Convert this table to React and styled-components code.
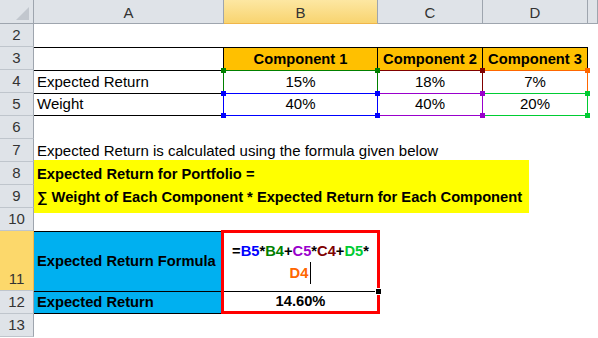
import React from "react"
import styled, { createGlobalStyle } from "styled-components"

const GlobalStyle = createGlobalStyle`
  html, body {
    margin: 0;
    padding: 0;
    background: #fff;
  }
  body {
    overflow: hidden;
    font-family: "Liberation Sans", Arial, sans-serif;
  }
`

const headerBg = "#dfe3e8"
const headerLine = "#9ea5ae"

const Sheet = styled.div`
  display: grid;
  grid-template-columns: 34px 190px 154px 105px 105px 1fr;
  grid-template-rows: 24px repeat(9, 23px) 60px 23px 23px 1fr;
  width: 598px;
  height: 338px;
  font-size: 15px;
  color: #000;
  background: #fff;
`

const Corner = styled.div`
  grid-column: 1;
  grid-row: 1;
  display: flex;
  align-items: flex-end;
  justify-content: flex-end;
  padding: 0 3px 2px 0;
  box-sizing: border-box;
  background: ${headerBg};
  border-right: 1px solid ${headerLine};
  border-bottom: 1px solid ${headerLine};
`

const ColHeader = styled.div`
  grid-column: ${p => p.$col};
  grid-row: 1;
  display: flex;
  align-items: center;
  justify-content: center;
  padding-top: 2px;
  box-sizing: border-box;
  color: #333;
  background: ${p =>
    p.$selected ? "linear-gradient(#fde7a2, #f8d470)" : headerBg};
  border-right: 1px solid ${headerLine};
  border-bottom: 1px solid ${p => (p.$selected ? "#f0b64a" : headerLine)};
`

const RowHeader = styled.div`
  grid-column: 1;
  grid-row: ${p => p.$row};
  display: flex;
  align-items: flex-end;
  justify-content: center;
  padding-bottom: 1px;
  box-sizing: border-box;
  line-height: 20px;
  color: #333;
  background: ${p => (p.$selected ? "#fcd86b" : headerBg)};
  border-right: 1px solid ${p => (p.$selected ? "#f0b64a" : headerLine)};
  border-bottom: 1px solid #bfc5cc;
`

const line = "1px solid #000"

const Cell = styled.div`
  grid-column: ${p => p.$col} / span ${p => p.$span || 1};
  grid-row: ${p => p.$row};
  position: relative;
  display: flex;
  align-items: ${p => (p.$middle ? "center" : "flex-end")};
  justify-content: ${p => (p.$center ? "center" : "flex-start")};
  padding: 0 3px 1px;
  box-sizing: border-box;
  line-height: 20px;
  white-space: nowrap;
  font-weight: ${p => (p.$bold ? 700 : 400)};
  font-size: ${p => (p.$bold ? "14.7px" : "15px")};
  background: ${p => p.$bg || "transparent"};
  border-top: ${p => (p.$top ? line : "0")};
  border-right: ${p => (p.$right ? line : "0")};
  border-bottom: ${p => (p.$bottom ? line : "0")};
`

const Highlight = styled.span`
  position: absolute;
  inset: -1px;
  border: 1px solid ${p => p.$color};
  z-index: ${p => p.$z};
  pointer-events: none;
`

const Handle = styled.i`
  position: absolute;
  width: 5px;
  height: 5px;
  background: ${p => p.$color};
  ${p => (p.$top ? "top: -3px;" : "bottom: -3px;")}
  ${p => (p.$left ? "left: -3px;" : "right: -3px;")}
`

const Banner = styled.div`
  grid-column: 2 / span 4;
  grid-row: 8 / span 2;
  margin: -2px 59px -5px 0;
  padding: 3px 3px 0;
  display: flex;
  flex-direction: column;
  background: #ffff00;
  font-weight: 700;
  font-size: 14.7px;
  line-height: 23px;
  white-space: nowrap;
`

const FormulaBox = styled.div`
  grid-column: 3;
  grid-row: 11 / span 2;
  position: relative;
  z-index: 10;
  margin: -1px -2px 0 -3px;
  display: flex;
  flex-direction: column;
  border: 3px solid #ff0000;
  font-weight: 700;
  font-size: 14.7px;
`

const FormulaText = styled.div`
  flex: 1;
  display: flex;
  flex-direction: column;
  align-items: center;
  justify-content: center;
  line-height: 22px;
  white-space: nowrap;
`

const FormulaLine = styled.div`
  display: flex;
  align-items: center;
`

const Ref = styled.span`
  color: ${p => p.$color};
`

const Cursor = styled.span`
  display: inline-block;
  width: 1px;
  height: 22px;
  margin-left: 2px;
  background: #000;
`

const Result = styled.div`
  position: relative;
  height: 20px;
  box-sizing: border-box;
  display: flex;
  align-items: center;
  justify-content: center;
  border-top: 1px solid #000;
  line-height: 19px;
`

const FillHandle = styled.span`
  position: absolute;
  top: -4px;
  right: -5px;
  width: 5px;
  height: 5px;
  background: #000;
  border: 1px solid #fff;
`

const corners = [
  { $top: true, $left: true },
  { $top: true },
  { $left: true },
  {},
]

const Ranged = ({ color, z }) => (
  <Highlight $color={color} $z={z}>
    {corners.map((c, i) => (
      <Handle key={i} $color={color} {...c} />
    ))}
  </Highlight>
)

const orange = "#ffc000"
const blue = "#00b0f0"

const values = [
  { row: 4, label: "Expected Return", cells: ["15%", "18%", "7%"], colors: ["#008000", "#800000", "#ff6600"], z: [3, 2, 1] },
  { row: 5, label: "Weight", cells: ["40%", "40%", "20%"], colors: ["#0000ff", "#9900cc", "#00cc33"], z: [6, 5, 4] },
]

const rows = [2, 3, 4, 5, 6, 7, 8, 9, 10, 11, 12, 13]

export default function App() {
  return (
    <>
      <GlobalStyle />
      <Sheet>
        <Corner>
          <svg width="14" height="14" viewBox="0 0 14 14">
            <polygon points="13,0 13,13 0,13" fill="#c2c7ce" />
          </svg>
        </Corner>
        <ColHeader $col={2}>A</ColHeader>
        <ColHeader $col={3} $selected>B</ColHeader>
        <ColHeader $col={4}>C</ColHeader>
        <ColHeader $col={5}>D</ColHeader>
        <ColHeader $col={6} />

        {rows.map(r => (
          <RowHeader key={r} $row={r} $selected={r === 11}>
            {r}
          </RowHeader>
        ))}

        <Cell $row={3} $col={2} $top $right />
        {["Component 1", "Component 2", "Component 3"].map((t, i) => (
          <Cell key={t} $row={3} $col={3 + i} $top $right $bold $center $bg={orange}>
            {t}
          </Cell>
        ))}

        {values.map(v => (
          <React.Fragment key={v.row}>
            <Cell $row={v.row} $col={2} $top $right $bottom={v.row === 5}>
              {v.label}
            </Cell>
            {v.cells.map((t, i) => (
              <Cell key={i} $row={v.row} $col={3 + i} $top $right $bottom={v.row === 5} $center>
                {t}
                <Ranged color={v.colors[i]} z={v.z[i]} />
              </Cell>
            ))}
          </React.Fragment>
        ))}

        <Cell $row={7} $col={2} $span={5}>
          Expected Return is calculated using the formula given below
        </Cell>

        <Banner>
          <span>Expected Return for Portfolio =</span>
          <span>∑ Weight of Each Component * Expected Return for Each Component</span>
        </Banner>

        <Cell $row={11} $col={2} $top $middle $bold $bg={blue}>
          Expected Return Formula
        </Cell>
        <Cell $row={12} $col={2} $top $bottom $bold $bg={blue}>
          Expected Return
        </Cell>

        <FormulaBox>
          <FormulaText>
            <FormulaLine>
              =<Ref $color="#0000ff">B5</Ref>*<Ref $color="#008000">B4</Ref>+
              <Ref $color="#9900cc">C5</Ref>*<Ref $color="#800000">C4</Ref>+
              <Ref $color="#00cc33">D5</Ref>*
            </FormulaLine>
            <FormulaLine>
              <Ref $color="#ff6600">D4</Ref>
              <Cursor />
            </FormulaLine>
          </FormulaText>
          <Result>
            14.60%
            <FillHandle />
          </Result>
        </FormulaBox>
      </Sheet>
    </>
  )
}
